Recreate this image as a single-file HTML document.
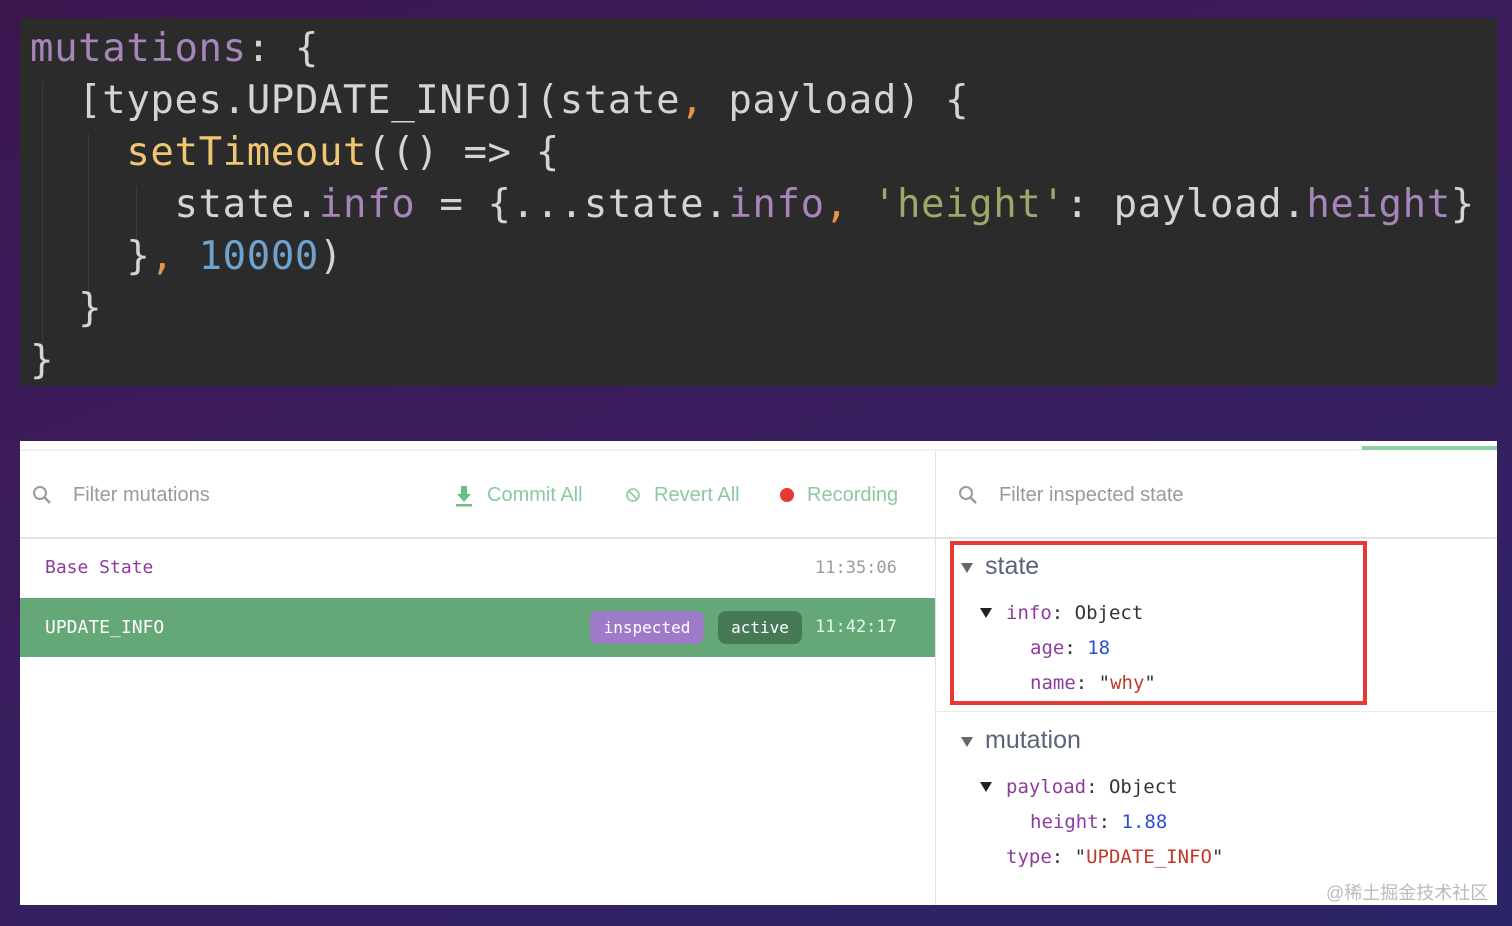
<!DOCTYPE html>
<html><head><meta charset="utf-8"><style>
*{margin:0;padding:0;box-sizing:border-box}
body{width:1512px;height:926px;overflow:hidden;background:linear-gradient(160deg,#3d1650 0%,#3a1d5e 45%,#2a2466 100%);position:relative;font-family:"Liberation Sans",sans-serif}
.code{position:absolute;left:20px;top:18px;width:1477px;height:368px;background:#2b2b2b}
.l{position:absolute;left:10px;font-family:"DejaVu Sans Mono","Liberation Mono",monospace;font-size:39px;color:#d4d4d4;white-space:pre;line-height:52px;letter-spacing:0.6px}
.p{color:#a785b8}.y{color:#f0c674}.o{color:#e89440}.b{color:#6ea3cf}.g{color:#9aa86a}
.guide{position:absolute;width:1px;background:#3c3c3c}
.panel{position:absolute;left:20px;top:441px;width:1477px;height:464px;background:#fff}
.abs{position:absolute}
.gr{color:#8cc8a2;font-size:20px}
.mono{font-family:"DejaVu Sans Mono","Liberation Mono",monospace}
</style></head><body>
<div class="code">
<div class="guide" style="left:22px;top:64px;height:300px"></div>
<div class="guide" style="left:68px;top:116px;height:160px"></div>
<div class="guide" style="left:116px;top:168px;height:60px"></div>
<div class="l" style="top:5px"><span class="p">mutations</span>: {</div>
<div class="l" style="top:57px">  [types.UPDATE_INFO](state<span class="o">,</span> payload) {</div>
<div class="l" style="top:109px">    <span class="y">setTimeout</span>(() =&gt; {</div>
<div class="l" style="top:161px">      state.<span class="p">info</span> = {...state.<span class="p">info</span><span class="o">,</span> <span class="g">'height'</span>: payload.<span class="p">height</span>}</div>
<div class="l" style="top:213px">    }<span class="o">,</span> <span class="b">10000</span>)</div>
<div class="l" style="top:265px">  }</div>
<div class="l" style="top:317px">}</div>
</div>
<div class="panel">
<div class="abs" style="left:0;top:8px;width:1477px;height:3px;background:linear-gradient(#e8e8e8,#fff)"></div>
<div class="abs" style="left:1342px;top:5px;width:135px;height:4px;background:#8fcfa5"></div>
<div class="abs" style="left:915px;top:10px;width:1px;height:454px;background:#e2e2e2"></div>
<div class="abs" style="left:0;top:96px;width:1477px;height:2px;background:#e4e4e4"></div>
<svg class="abs" style="left:10px;top:42px" width="24" height="24" viewBox="0 0 24 24"><circle cx="10" cy="10" r="6" fill="none" stroke="#9a9a9a" stroke-width="2"/><path d="M14 14l6 6" stroke="#9a9a9a" stroke-width="2.5"/></svg>
<div class="abs" style="left:53px;top:43px;font-size:20px;color:#9a9a9a">Filter mutations</div>
<svg class="abs" style="left:434px;top:43px" width="20" height="24" viewBox="0 0 20 24"><path d="M7 2h6v8h4l-7 8-7-8h4z" fill="#6dbd8a"/><rect x="2" y="20" width="16" height="2.5" fill="#6dbd8a"/></svg>
<div class="abs gr" style="left:467px;top:43px">Commit All</div>
<svg class="abs" style="left:605px;top:46px" width="16" height="16" viewBox="0 0 16 16"><circle cx="8" cy="8" r="6" fill="none" stroke="#8cc8a2" stroke-width="1.6"/><path d="M4 4l8 8" stroke="#8cc8a2" stroke-width="1.6"/></svg>
<div class="abs gr" style="left:634px;top:43px">Revert All</div>
<div class="abs" style="left:760px;top:47px;width:14px;height:14px;border-radius:50%;background:#e53935"></div>
<div class="abs gr" style="left:787px;top:43px">Recording</div>
<div class="abs mono" style="left:25px;top:116px;font-size:18px;color:#8e3c9c">Base State</div>
<div class="abs mono" style="left:795px;top:117px;font-size:17px;color:#9a9a9a">11:35:06</div>
<div class="abs" style="left:0;top:157px;width:915px;height:59px;background:#64a877"></div>
<div class="abs mono" style="left:25px;top:176px;font-size:18px;color:#fff">UPDATE_INFO</div>
<div class="abs mono" style="left:570px;top:170px;width:114px;height:33px;border-radius:8px;background:#9e7bc9;color:#fff;font-size:16px;line-height:33px;text-align:center">inspected</div>
<div class="abs mono" style="left:698px;top:170px;width:84px;height:33px;border-radius:8px;background:#457a55;color:#fff;font-size:16px;line-height:33px;text-align:center">active</div>
<div class="abs mono" style="left:795px;top:176px;font-size:17px;color:#e8f5ea">11:42:17</div>
<svg class="abs" style="left:936px;top:42px" width="24" height="24" viewBox="0 0 24 24"><circle cx="10" cy="10" r="6" fill="none" stroke="#9a9a9a" stroke-width="2"/><path d="M14 14l6 6" stroke="#9a9a9a" stroke-width="2.5"/></svg>
<div class="abs" style="left:979px;top:43px;font-size:20px;color:#9a9a9a">Filter inspected state</div>
<div class="abs" style="left:915px;top:270px;width:562px;height:1px;background:#ececec"></div>
<div class="abs" style="left:930px;top:100px;width:417px;height:164px;border:4px solid #e53935"></div>
<svg class="abs" style="left:940px;top:121px" width="14" height="12" viewBox="0 0 14 12"><path d="M1 1h12L7 11z" fill="#666"/></svg>
<div class="abs" style="left:965px;top:111px;font-size:25px;color:#5a6478">state</div>
<svg class="abs" style="left:959px;top:166px" width="14" height="12" viewBox="0 0 14 12"><path d="M1 1h12L7 11z" fill="#222"/></svg>
<div class="abs mono" style="left:986px;top:161px;font-size:19px;color:#333"><span style="color:#8e3c9c">info</span>: Object</div>
<div class="abs mono" style="left:1010px;top:196px;font-size:19px;color:#333"><span style="color:#8e3c9c">age</span>: <span style="color:#2b4fd6">18</span></div>
<div class="abs mono" style="left:1010px;top:231px;font-size:19px;color:#333"><span style="color:#8e3c9c">name</span>: "<span style="color:#c0392b">why</span>"</div>
<svg class="abs" style="left:940px;top:295px" width="14" height="12" viewBox="0 0 14 12"><path d="M1 1h12L7 11z" fill="#666"/></svg>
<div class="abs" style="left:965px;top:285px;font-size:25px;color:#5a6478">mutation</div>
<svg class="abs" style="left:959px;top:340px" width="14" height="12" viewBox="0 0 14 12"><path d="M1 1h12L7 11z" fill="#222"/></svg>
<div class="abs mono" style="left:986px;top:335px;font-size:19px;color:#333"><span style="color:#8e3c9c">payload</span>: Object</div>
<div class="abs mono" style="left:1010px;top:370px;font-size:19px;color:#333"><span style="color:#8e3c9c">height</span>: <span style="color:#2b4fd6">1.88</span></div>
<div class="abs mono" style="left:986px;top:405px;font-size:19px;color:#333"><span style="color:#8e3c9c">type</span>: "<span style="color:#c0392b">UPDATE_INFO</span>"</div>
<div class="abs" style="left:1306px;top:438px;font-size:18px;color:#bbb;font-family:'Liberation Sans','Noto Sans CJK SC',sans-serif">@稀土掘金技术社区</div>
</div>
</body></html>
